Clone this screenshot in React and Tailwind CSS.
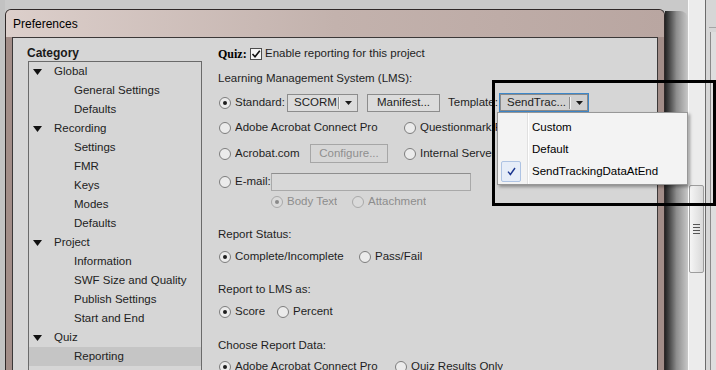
import React from "react";

const FONT = "font-['Liberation_Sans',Arial,sans-serif]";

function Radio({ checked, disabled }) {
  return (
    <span
      className={`w-[12px] h-[12px] rounded-full border flex items-center justify-center shrink-0 ${
        disabled ? "border-[#a9a9a9] bg-[#dadada]" : "border-[#7d7d7d] bg-[#ebebeb]"
      }`}
    >
      {checked && (
        <span className={`w-[4px] h-[4px] rounded-full ${disabled ? "bg-[#8a8a8a]" : "bg-[#1e1e1e]"}`} />
      )}
    </span>
  );
}

function Opt({ checked, disabled, label, w, clip }) {
  return (
    <div className="flex items-center gap-[4px] shrink-0" style={w ? { width: w } : undefined}>
      <Radio checked={checked} disabled={disabled} />
      <span
        className={`whitespace-nowrap overflow-hidden ${disabled ? "text-[#8d8d8d]" : ""}`}
        style={clip ? { maxWidth: clip } : undefined}
      >
        {label}
      </span>
    </div>
  );
}

function Arrow() {
  return (
    <svg width="7" height="4" viewBox="0 0 7 4">
      <polygon points="0,0 7,0 3.5,4" fill="#1a1a1a" />
    </svg>
  );
}

function Triangle() {
  return (
    <svg width="9" height="6" viewBox="0 0 9 6">
      <polygon points="0,0 9,0 4.5,6" fill="#111" />
    </svg>
  );
}

const tree = [
  ["Global", 0],
  ["General Settings", 1],
  ["Defaults", 1],
  ["Recording", 0],
  ["Settings", 1],
  ["FMR", 1],
  ["Keys", 1],
  ["Modes", 1],
  ["Defaults", 1],
  ["Project", 0],
  ["Information", 1],
  ["SWF Size and Quality", 1],
  ["Publish Settings", 1],
  ["Start and End", 1],
  ["Quiz", 0],
  ["Reporting", 1, true],
];

export default function App() {
  return (
    <div className={`${FONT} text-[11.5px] text-[#1e1e1e] w-[716px] h-[370px] overflow-hidden relative flex bg-[#c9c9c9]`}>
      {/* left desktop sliver */}
      <div className="w-[5px] shrink-0 bg-[#c2c2c2]" />

      {/* dialog */}
      <div className="w-[660px] shrink-0 pt-[9px] flex flex-col">
        <div className="flex-1 flex flex-col rounded-t-[6px] border border-b-0 border-[#2f2828] bg-[#a28d88] overflow-hidden">
          <div className="h-[27px] shrink-0 flex items-center pl-[7px] bg-linear-to-r from-[#dccfcb] via-[#c3b2ad] to-[#b9a6a1] text-[12px] text-black">
            Preferences
          </div>
          <div className="flex-1 mx-[6px] border border-b-0 border-[#3b3838] bg-[#d6d6d6] flex">
            {/* left column */}
            <div className="w-[205px] shrink-0 flex flex-col">
              <div className="mt-[7px] h-[16px] pl-[14px] flex items-center font-bold text-[12px] text-[#1a1a1a]">
                Category
              </div>
              <div className="ml-[15px] w-[174px] flex-1 border border-b-0 border-[#6a6a6a] flex flex-col text-[#222]">
                {tree.map(([label, lvl, sel], i) => (
                  <div
                    key={i}
                    className={`h-[19px] shrink-0 flex items-center ${sel ? "bg-[#c5c5c5]" : ""}`}
                  >
                    {lvl === 0 ? (
                      <>
                        <span className="w-[25px] pl-[4px] flex items-center">
                          <Triangle />
                        </span>
                        <span>{label}</span>
                      </>
                    ) : (
                      <span className="pl-[45px] whitespace-nowrap">{label}</span>
                    )}
                  </div>
                ))}
              </div>
            </div>

            {/* right column */}
            <div className="flex-1 flex flex-col">
              <div className="mt-[8px] h-[16px] flex items-center">
                <span className="font-['Liberation_Serif',serif] font-bold text-[12px] text-black w-[32px]">Quiz:</span>
                <span className="w-[12px] h-[12px] border border-[#4d4d4d] bg-[#f4f4f4] flex items-center justify-center">
                  <svg width="10" height="10" viewBox="0 0 10 10">
                    <path d="M1.5 5 L4 7.8 L8.8 1.8" stroke="#111" strokeWidth="1.6" fill="none" />
                  </svg>
                </span>
                <span className="ml-[3px]">Enable reporting for this project</span>
              </div>

              <div className="mt-[9px] h-[16px] flex items-center">Learning Management System (LMS):</div>

              <div className="mt-[6px] h-[19px] flex items-center pl-[1px]">
                <Opt checked label="Standard:" w={68} />
                <div className="w-[71px] h-[18px] border border-[#8c8c8c] bg-[#dcdcdc] flex items-center">
                  <span className="flex-1 pl-[6px]">SCORM</span>
                  <span className="w-[2px] h-[12px] border-l border-[#8f8f8f] border-r border-r-[#f2f2f2]" />
                  <span className="w-[17px] flex items-center justify-center">
                    <Arrow />
                  </span>
                </div>
                <div className="ml-[9px] w-[73px] h-[18px] border border-[#8c8c8c] bg-[#dcdcdc] flex items-center justify-center">
                  Manifest...
                </div>
                <span className="ml-[8px] w-[51px]">Template:</span>
                <div className="w-[90px] h-[19px] border border-[#3d87c9] flex">
                  <div className="flex-1 border border-[#8a8a8a] bg-[#d0d0d0] flex items-center">
                    <span className="flex-1 pl-[6px] whitespace-nowrap">SendTrac...</span>
                    <span className="w-[2px] h-[12px] border-l border-[#8f8f8f] border-r border-r-[#f2f2f2]" />
                    <span className="w-[16px] flex items-center justify-center">
                      <Arrow />
                    </span>
                  </div>
                </div>
              </div>

              <div className="mt-[8px] h-[16px] flex items-center pl-[1px]">
                <Opt label="Adobe Acrobat Connect Pro" w={185} />
                <Opt label="Questionmark Perception" clip={77} />
              </div>

              <div className="mt-[8px] h-[19px] flex items-center pl-[1px]">
                <Opt label="Acrobat.com" w={91} />
                <div className="w-[78px] h-[19px] border border-[#a6a6a6] flex items-center justify-center text-[#8f8f8f]">
                  Configure...
                </div>
                <div className="ml-[16px]">
                  <Opt label="Internal Server" clip={77} />
                </div>
              </div>

              <div className="mt-[9px] h-[19px] flex items-center pl-[1px]">
                <Opt label="E-mail:" w={52} />
                <div className="w-[200px] h-[18px] border border-[#a9a9a9] border-t-[#8e8e8e] bg-[#d8d8d8]" />
              </div>

              <div className="mt-[3px] h-[16px] flex items-center pl-[53px]">
                <Opt checked disabled label="Body Text" w={81} />
                <Opt disabled label="Attachment" />
              </div>

              <div className="mt-[17px] h-[16px] flex items-center">Report Status:</div>
              <div className="mt-[6px] h-[16px] flex items-center pl-[1px]">
                <Opt checked label="Complete/Incomplete" w={140} />
                <Opt label="Pass/Fail" />
              </div>

              <div className="mt-[17px] h-[16px] flex items-center">Report to LMS as:</div>
              <div className="mt-[6px] h-[16px] flex items-center pl-[1px]">
                <Opt checked label="Score" w={58} />
                <Opt label="Percent" />
              </div>

              <div className="mt-[18px] h-[16px] flex items-center">Choose Report Data:</div>
              <div className="mt-[5px] h-[16px] flex items-center pl-[1px]">
                <Opt checked label="Adobe Acrobat Connect Pro" w={176} />
                <Opt label="Quiz Results Only" />
              </div>
            </div>
          </div>
        </div>
      </div>

      {/* dialog shadow */}
      <div className="w-[23px] shrink-0 pt-[11px] flex flex-col bg-[#c9c9c9]">
        <div className="flex-1 rounded-tr-[8px] bg-linear-to-r from-[#232323] via-[#8e8e8e] to-[#c8c8c8]" />
      </div>

      {/* scroll strip */}
      <div className="w-[17px] shrink-0 bg-[#ececec] border-l border-[#fafafa] flex flex-col">
        <div className="mt-[185px] h-[88px] mr-[1px] rounded-[2px] border border-[#9d9d9d] bg-linear-to-r from-[#f5f5f5] to-[#d9d9d9] flex flex-col items-center justify-center gap-[2px]">
          <span className="w-[7px] h-[1px] bg-[#555]" />
          <span className="w-[7px] h-[1px] bg-[#555]" />
          <span className="w-[7px] h-[1px] bg-[#555]" />
          <span className="w-[7px] h-[1px] bg-[#555]" />
        </div>
      </div>
      <div className="w-[1px] shrink-0 bg-[#6b6b6b]" />
      <div className="flex-1 bg-[#d6d6d6] flex flex-col">
        <div className="mt-[27px] ml-[3px] h-[1px] bg-[#a5a5a5]" />
        <div className="mt-[4px] ml-[4px] flex-1 border-l border-[#8a8a8a] bg-[#dedede]" />
      </div>

      {/* dropdown menu */}
      <div className="absolute left-[497px] top-[112px] w-[191px] h-[73px] border border-[#979797] bg-[#f3f3f3] shadow-[2px_2px_3px_rgba(0,0,0,0.35)] flex">
        <div className="w-[29px] shrink-0 flex flex-col pt-[3px]">
          <div className="h-[22px]" />
          <div className="h-[22px]" />
          <div className="h-[22px] flex items-center pl-[3px]">
            <span className="w-[20px] h-[21px] rounded-[2px] border border-[#aec3e3] bg-[#e6edf8] flex items-center justify-center">
              <svg width="9" height="9" viewBox="0 0 9 9">
                <path d="M1 4.6 L3.4 7.5 L8 1" stroke="#1b3690" strokeWidth="1.4" fill="none" />
              </svg>
            </span>
          </div>
        </div>
        <div className="w-[2px] shrink-0 border-l border-[#e0e0e0] border-r border-r-white" />
        <div className="flex-1 flex flex-col pt-[4px] pl-[3px] text-black">
          <div className="h-[22px] flex items-center">Custom</div>
          <div className="h-[22px] flex items-center">Default</div>
          <div className="h-[22px] flex items-center">SendTrackingDataAtEnd</div>
        </div>
      </div>

      {/* annotation rectangle */}
      <div className="absolute left-[492px] top-[80px] w-[224px] h-[126px] border-[3px] border-black" />
    </div>
  );
}
